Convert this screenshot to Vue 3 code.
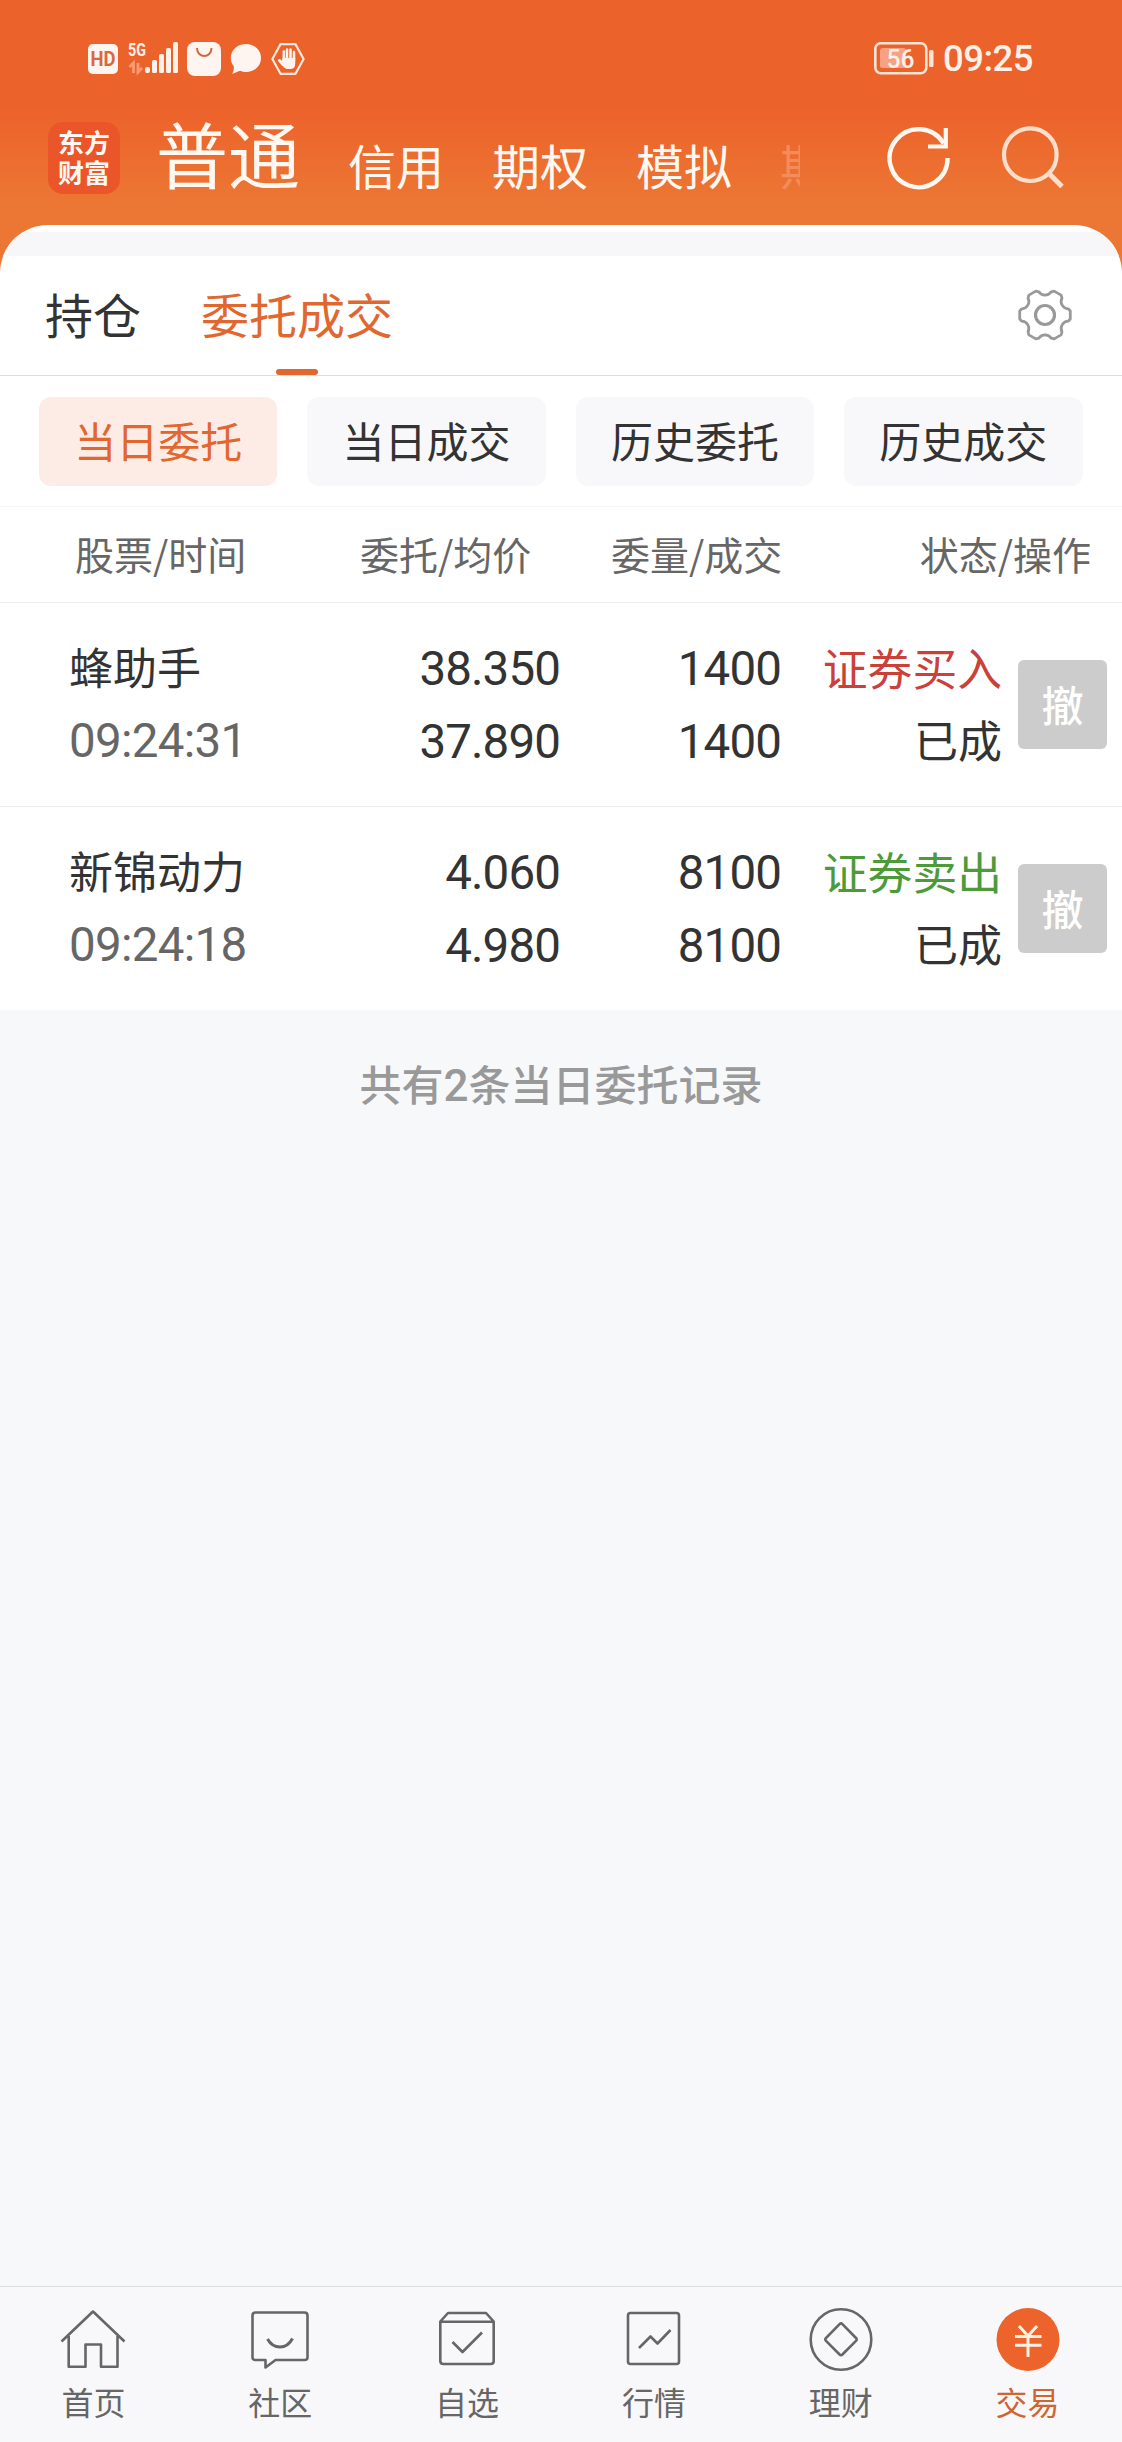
<script setup>
const accounts = ['信用', '期权', '模拟']
const filters = ['当日委托', '当日成交', '历史委托', '历史成交']
const orders = [
  { name: '蜂助手', time: '09:24:31', price: '38.350', avg: '37.890', qty: '1400', filled: '1400', side: '证券买入', kind: 'buy', state: '已成' },
  { name: '新锦动力', time: '09:24:18', price: '4.060', avg: '4.980', qty: '8100', filled: '8100', side: '证券卖出', kind: 'sell', state: '已成' },
]

// Six-toothed gear outline around (28, 28)
const polar = (r, deg) => {
  const a = (deg * Math.PI) / 180
  return `${(28 + r * Math.cos(a)).toFixed(2)} ${(28 + r * Math.sin(a)).toFixed(2)}`
}
let gear = ''
for (let k = 0; k < 6; k++) {
  const c = k * 60
  gear += `${k ? 'L' : 'M'}${polar(25.6, c - 9)}L${polar(25.6, c + 9)}L${polar(24, c + 15)}A7.4 7.4 0 0 0 ${polar(24, c + 45)}`
}
gear += 'Z'
</script>

<template>
  <div class="app">
    <header class="hero">
      <div class="status">
        <div class="status-left">
          <svg class="i-hd" width="30" height="30" viewBox="0 0 30 30">
            <rect width="30" height="30" rx="5" fill="#fff5f0" />
            <text x="15" y="22" text-anchor="middle" textLength="25" lengthAdjust="spacingAndGlyphs" font-family="Roboto, sans-serif" font-weight="700" font-size="20" fill="#d9683c">HD</text>
          </svg>
          <svg class="i-signal" width="52" height="34" viewBox="0 0 52 34">
            <text x="0" y="14" textLength="18" lengthAdjust="spacingAndGlyphs" font-family="Roboto, sans-serif" font-weight="700" font-size="18.5" fill="#fff0e8">5G</text>
            <path d="M1.500 25l4-4v10M10 21v9l4-4" fill="none" stroke="#ff9a73" stroke-width="2.800" />
            <g fill="#fff0e8">
              <rect x="17" y="25" width="5" height="6" rx="2" />
              <rect x="24" y="18" width="5" height="13" rx="1.500" />
              <rect x="31" y="12" width="5" height="19" rx="1.500" />
              <rect x="38" y="6" width="5" height="25" rx="1.500" />
              <rect x="45" y="0" width="5" height="31" rx="1.500" />
            </g>
          </svg>
          <svg class="i-bag" width="34" height="34" viewBox="0 0 34 34">
            <rect width="34" height="34" rx="8" fill="#fff5f0" />
            <path d="M10 6c0 10.500 14.500 10.500 14.500 0" fill="none" stroke="#cf6a3e" stroke-width="2" />
          </svg>
          <svg class="i-chat" width="32" height="32" viewBox="0 0 32 32">
            <path d="M16 1c8.500 0 15 6 15 14s-6.500 14-15 14c-2 0-4-.4-6-1.200L2 31c1.500-2 2-4 1.800-7.500C1.800 21 .8 18 .8 15 .8 7 7.500 1 16 1z" fill="#fff5f0" />
          </svg>
          <svg class="i-hand" width="34" height="32" viewBox="0 0 34 32">
            <path d="M9.500 1.200h15L32.600 16l-8.100 14.800h-15L1.400 16z" fill="none" stroke="#ffeade" stroke-width="2.200" stroke-linejoin="round" />
            <g fill="none" stroke="#fff5f0" stroke-linecap="round">
              <path d="M12.800 8.500v9M16 6.500v11M19.500 6.500v11M23 9v9" stroke-width="2.500" />
              <path d="M8.500 17.500l3.500 4" stroke-width="3" />
            </g>
            <path d="M11.600 15h12.600v6q0 4.500-4.200 5h-4q-3-.5-5.500-5z" fill="#fff5f0" />
          </svg>
        </div>
        <div class="status-right">
          <svg width="62" height="34" viewBox="0 0 62 34">
            <rect x="1.300" y="1.300" width="51" height="30" rx="5.500" fill="none" stroke="#ffe3d4" stroke-width="2.600" />
            <rect x="6" y="6" width="26" height="20" rx="2.500" fill="#f6a183" />
            <rect x="55" y="8" width="4.500" height="17" rx="1.500" fill="#ffe3d4" />
            <text x="26.500" y="25.500" text-anchor="middle" textLength="28" lengthAdjust="spacingAndGlyphs" font-family="Roboto, sans-serif" font-weight="500" font-size="26" fill="#fff0e8">56</text>
          </svg>
          <span class="clock">09:25</span>
        </div>
      </div>

      <div class="nav">
        <div class="logo">东方<br />财富</div>
        <strong class="current">普通</strong>
        <div class="accounts">
          <span v-for="a in accounts" :key="a">{{ a }}</span>
          <span class="faded">期</span>
        </div>
        <svg class="refresh" width="66" height="66" viewBox="0 0 66 66" fill="none" stroke="#fff8f0" stroke-width="4.400">
          <path d="M61.600 34A29 29 0 1 1 57.600 19.500" />
          <path d="M59.800 4v18.500H42" stroke-width="4.200" />
        </svg>
        <svg class="search" width="66" height="66" viewBox="0 0 66 66" fill="none" stroke="#ffdfcc" stroke-width="4.200">
          <circle cx="30.300" cy="29.700" r="26.300" />
          <path d="M49 48.500L62 61.500" stroke-width="5" />
        </svg>
      </div>
    </header>

    <main class="sheet">
      <div class="strip"></div>
      <div class="tabs">
        <span class="tab">持仓</span>
        <span class="tab active">委托成交</span>
        <svg class="gear" width="56" height="56" viewBox="0 0 56 56" fill="none" stroke="#999" stroke-linejoin="round">
          <path :d="gear" stroke-width="2.800" />
          <circle cx="28" cy="28" r="9.500" stroke-width="3.200" />
        </svg>
      </div>
      <div class="filters">
        <span v-for="(f, i) in filters" :key="f" class="chip" :class="{ on: i === 0 }">{{ f }}</span>
      </div>
      <div class="row head">
        <span class="h1">股票/时间</span>
        <span class="h2">委托/均价</span>
        <span class="h3">委量/成交</span>
        <span class="h4">状态/操作</span>
      </div>
      <div v-for="o in orders" :key="o.time" class="row order">
        <div class="cell c1"><span>{{ o.name }}</span><span class="time">{{ o.time }}</span></div>
        <div class="cell num c2"><span>{{ o.price }}</span><span>{{ o.avg }}</span></div>
        <div class="cell num c3"><span>{{ o.qty }}</span><span>{{ o.filled }}</span></div>
        <div class="cell c4"><span class="side" :class="o.kind">{{ o.side }}</span><span>{{ o.state }}</span></div>
        <button class="cancel">撤</button>
      </div>
    </main>

    <p class="summary">共有<span class="two">2</span>条当日委托记录</p>

    <nav class="bottom">
      <div class="item">
        <svg width="66" height="66" viewBox="0 0 66 66">
          <path d="M1.500 34.500L33 4.500l31.500 30M8.700 29v30.800h16.800V37.500h15.500v22.300h16.500V29" />
        </svg>
        <span>首页</span>
      </div>
      <div class="item">
        <svg width="66" height="66" viewBox="0 0 66 66">
          <path d="M8.500 5.500h49q3 0 3 3v42q0 2.500-3 2.500H28.500l-10 7.500V53H8.500q-3 0-3-2.500v-42q0-3 3-3z" />
          <path d="M20.500 32q4.500 8 12.500 8t12.500-8.500" stroke-width="3" />
        </svg>
        <span>社区</span>
      </div>
      <div class="item">
        <svg width="66" height="66" viewBox="0 0 66 66">
          <path d="M6.300 14.500L14 6h38l7.700 8.500V54q0 3-3 3H9.300q-3 0-3-3zM6.300 14.800h53.400" />
          <path d="M18.500 35l10 10 19.500-19.500" />
        </svg>
        <span>自选</span>
      </div>
      <div class="item">
        <svg width="66" height="66" viewBox="0 0 66 66">
          <rect x="7" y="6" width="51" height="51" rx="2.500" />
          <path d="M18 41l11.500-11.500 7 7 13-13.500" />
        </svg>
        <span>行情</span>
      </div>
      <div class="item">
        <svg width="66" height="66" viewBox="0 0 66 66">
          <circle cx="33" cy="32.500" r="30.300" />
          <path d="M31.600 17.200q1.400-1.400 2.800 0l13.600 13.800q1.400 1.400 0 2.800L34.400 47.500q-1.400 1.400-2.800 0L18 33.800q-1.400-1.400 0-2.800z" />
        </svg>
        <span>理财</span>
      </div>
      <div class="item active">
        <svg width="66" height="66" viewBox="0 0 66 66">
          <circle cx="33" cy="32.500" r="31.500" class="disc" />
          <path d="M24 19l9 10 9-10M33 29v21M20 29.500h26.500M20 38.300h26.500" class="mark" />
        </svg>
        <span>交易</span>
      </div>
    </nav>
  </div>
</template>

<style>
body {
  margin: 0;
  background: #f7f8fa;
}
</style>

<style scoped>
.app {
  width: 1122px;
  height: 2442px;
  display: flex;
  flex-direction: column;
  overflow: hidden;
  background: #f7f8fa;
  color: #333;
  font-family: "Noto Sans CJK SC", sans-serif;
}
.hero {
  height: 225px;
  flex: none;
  padding-bottom: 60px;
  margin-bottom: -60px;
  background: linear-gradient(#ec622b 0, #ec622b 108px, #ec7734 205px, #ec7734 100%);
}
.status {
  height: 116px;
  display: flex;
  justify-content: space-between;
  align-items: flex-start;
}
.status svg { overflow: visible; }
.status-left {
  display: flex;
  padding: 42px 0 0 88px;
}
.i-hd { margin-top: 2px; }
.i-signal { margin-left: 10px; }
.i-bag { margin-left: 7px; }
.i-chat { margin: 1px 0 0 9px; }
.i-hand { margin: 1px 0 0 9px; }
.status-right {
  display: flex;
  padding: 42px 89px 0 0;
}
.clock {
  margin-left: 7px;
  width: 90px;
  font: 500 36.5px/33px Roboto, sans-serif;
  letter-spacing: -0.5px;
  color: #fff0e8;
}
.nav {
  display: flex;
  height: 109px;
  align-items: flex-start;
}
.logo {
  width: 72px;
  height: 72px;
  margin: 6px 0 0 48px;
  padding-top: 5px;
  box-sizing: border-box;
  border-radius: 15px;
  background: #ea5529;
  color: #fff8f2;
  text-align: center;
  font-weight: 700;
  font-size: 26px;
  line-height: 30px;
}
.current {
  margin-left: 36px;
  font-weight: 400;
  font-size: 72px;
  line-height: 72px;
  color: #fff8f0;
}
.accounts {
  width: 501px;
  margin: 12px 0 0 48px;
  display: flex;
  gap: 48px;
  white-space: nowrap;
  font-size: 48px;
  line-height: 72px;
  color: #fff8f0;
}
.accounts span { flex: none; }
.accounts .faded {
  width: 20px;
  overflow: hidden;
  color: #f28c58;
}
.refresh { margin: 8px 0 0 37px; }
.search { margin: 9px 0 0 48px; }
.refresh, .search { flex: none; }

.sheet {
  flex: none;
  background: #fff;
  border-radius: 48px 48px 0 0;
  padding-top: 7px;
  overflow: hidden;
}
.strip {
  height: 24px;
  background: #f7f7fa;
}
.tabs {
  height: 119px;
  display: flex;
  align-items: center;
  padding: 0 49px 0 45px;
  border-bottom: 1px solid #ddd;
  font-size: 48px;
  line-height: 60px;
}
.tab { padding-bottom: 5px; }
.tab.active {
  position: relative;
  margin-left: 60px;
  color: #e1672f;
}
.tab.active::after {
  content: "";
  position: absolute;
  left: 50%;
  bottom: -27px;
  width: 42px;
  height: 6px;
  margin-left: -21px;
  border-radius: 3px;
  background: #e1672f;
}
.gear { margin: -1px 0 0 auto; }
.filters {
  display: flex;
  gap: 30px;
  padding: 21px 39.5px 20px 39px;
  border-bottom: 1px solid #f5f5f5;
}
.chip {
  flex: 1;
  height: 89px;
  border-radius: 12px;
  background: #f8f8fa;
  text-align: center;
  font-size: 42px;
  line-height: 86px;
}
.chip.on {
  background: #fcece5;
  color: #e1672f;
}
.row {
  display: flex;
  border-bottom: 1px solid #ececec;
}
.head {
  height: 95px;
  font-size: 39px;
  line-height: 92px;
  color: #666;
}
.head span { white-space: nowrap; }
.h1 { width: 285px; padding-left: 75px; }
.h2 { width: 251px; }
.h3 { width: 200px; }
.h4 { flex: 1; padding-right: 31px; text-align: right; }
.order { height: 203px; }
.order:last-child { border-bottom: 0; }
.cell {
  display: flex;
  flex-direction: column;
  padding-top: 27px;
  font-size: 44px;
  line-height: 73px;
  white-space: nowrap;
}
.c1 { width: 300px; padding-left: 69px; }
.time, .num {
  font-family: Roboto, sans-serif;
  font-size: 47.5px;
  letter-spacing: -0.9px;
}
.time {
  color: #666;
  letter-spacing: -0.7px;
  padding-top: 3px;
  line-height: 70px;
}
.num {
  text-align: right;
  padding-top: 30px;
}
.c2 { width: 191px; }
.c3 { width: 221px; }
.c4 { width: 221px; text-align: right; }
.side { font-size: 44.8px; }
.buy { color: #cb4039; }
.sell { color: #4d9a38; }
.cancel {
  width: 89px;
  height: 89px;
  margin: 57px 0 0 16px;
  padding: 0 0 2px;
  border: 0;
  border-radius: 6px;
  background: #ccc;
  color: #fff;
  font: 500 42px/87px "Noto Sans CJK SC", sans-serif;
}
.summary {
  margin: 35px 0 0;
  text-align: center;
  font-size: 42px;
  font-weight: 500;
  line-height: 75px;
  color: #999;
}
.two { font-family: Roboto, "Noto Sans CJK SC", sans-serif; font-size: 44px; line-height: 1; }
.bottom {
  margin-top: auto;
  height: 155px;
  flex: none;
  display: flex;
  padding-right: 1px;
  border-top: 1px solid #ddd;
  background: #f8f8fb;
}
.item {
  flex: 1;
  display: flex;
  flex-direction: column;
  align-items: center;
  padding-top: 20px;
  font-size: 32px;
  line-height: 40px;
  color: #666;
}
.item svg {
  fill: none;
  stroke: #666;
  stroke-width: 2.6;
  stroke-linejoin: round;
}
.item span { margin-top: 8px; }
.item.active { color: #cf6531; }
.item .disc { fill: #ec632b; stroke: none; }
.item .mark { stroke: #fff0e4; stroke-width: 3; stroke-linejoin: miter; }
</style>
